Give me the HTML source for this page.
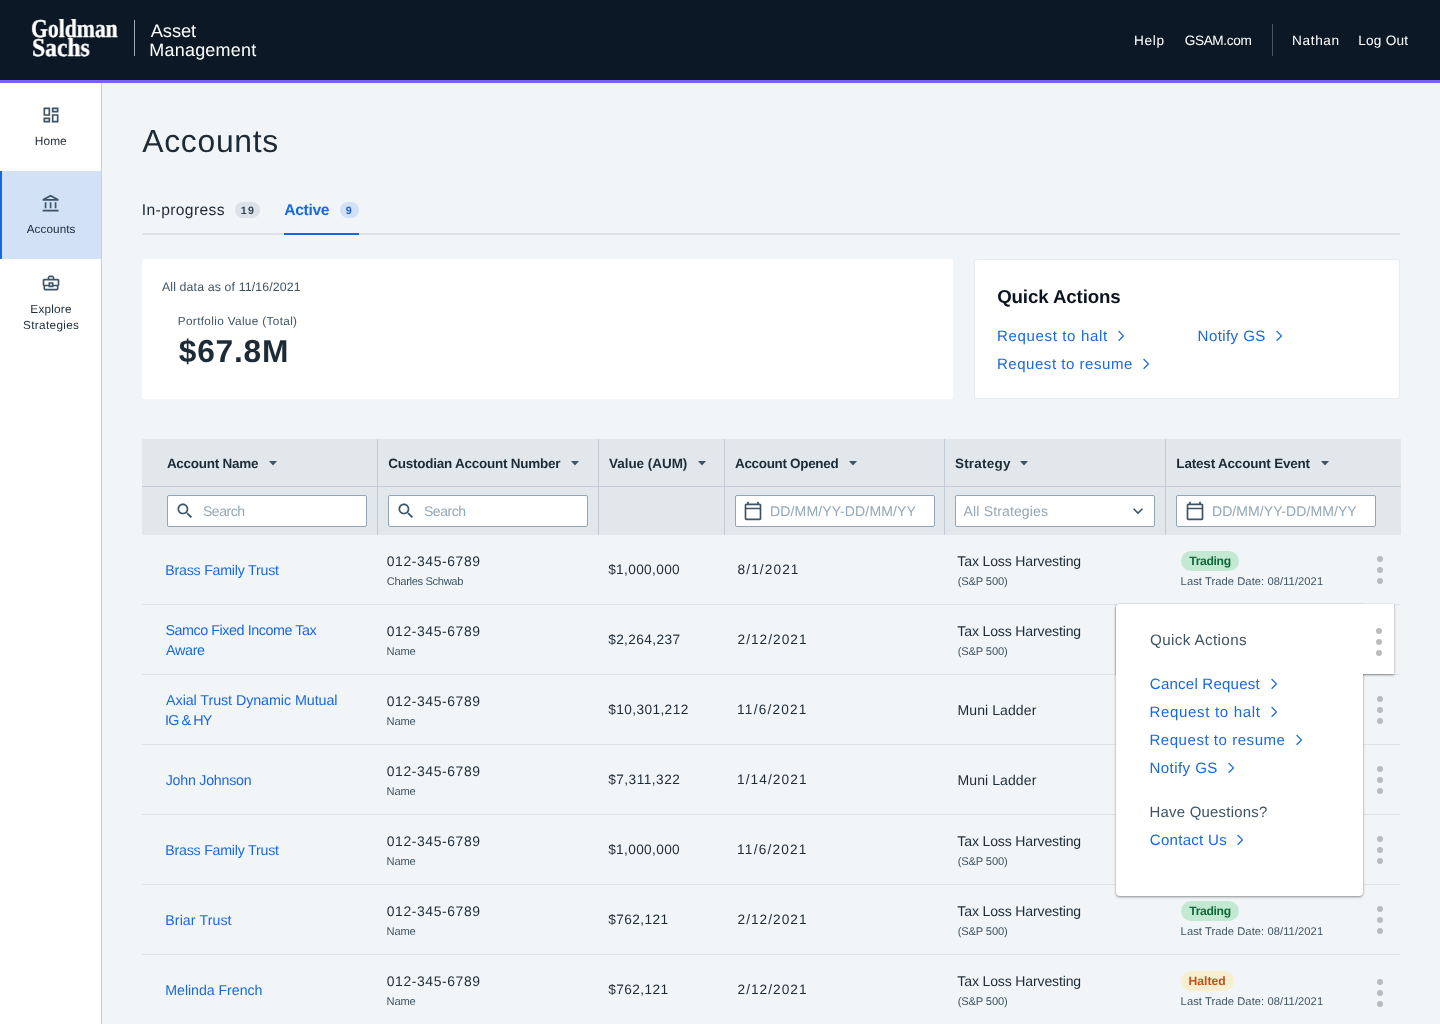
<!DOCTYPE html>
<html lang="en">
<head>
<meta charset="utf-8">
<title>Accounts</title>
<style>
*{box-sizing:border-box;margin:0;padding:0}
html,body{width:1440px;height:1024px;overflow:hidden}
body{font-family:"Liberation Sans",sans-serif;background:#f2f5f8;color:#1c2b36;position:relative;text-rendering:geometricPrecision}
.t{position:absolute;white-space:nowrap;font-weight:normal;text-decoration:none;display:block}
.b{position:absolute}
.ic{position:absolute;display:block;overflow:visible}
#hdr{position:absolute;left:0;top:0;width:1440px;height:83px;background:#0d1826;border-bottom:3px solid #7b5ffb}
.gs{position:absolute;left:31px;top:18.5px;white-space:nowrap;font-family:"Liberation Serif",serif;font-weight:bold;color:#fff;font-size:25.8px;line-height:19px;transform-origin:0 0;transform:scaleX(.84);-webkit-text-stroke:.35px #fff;will-change:transform}
#side{position:absolute;left:0;top:83px;width:102px;height:941px;background:#fff;border-right:1px solid #c5cfda}
.sact{position:absolute;left:0;top:171px;width:101px;height:88px;background:#d2e1f6;border-left:2px solid #1a69da}
.badge{position:absolute;top:202px;height:16px;border-radius:8px}
.card{position:absolute;background:#fff;border-radius:2px}
#thead{position:absolute;left:142px;top:439px;width:1259px;height:96px;background:#e1e7eb}
.vsep{position:absolute;top:439px;width:1px;height:96px;background:#c2ccd7}
.inp{position:absolute;top:495px;height:32px;width:200px;background:#fff;border:1px solid #90a5b7;border-radius:2px}
.rl{position:absolute;left:142px;width:1258px;height:1px;background:#dde3e9}
.pill{position:absolute;height:20px;border-radius:10px}
.dot{position:absolute;width:6.4px;height:6.4px;border-radius:50%;background:#bbb}
.pop{position:absolute;background:#fff}
.lay{position:absolute;left:0;top:0;width:1440px;height:1024px;will-change:transform}
</style>
</head>
<body>
<div id="hdr">
  <div class="gs">Goldman</div>
  <div class="gs" style="top:37.5px;left:32px;transform:scaleX(.915)">Sachs</div>
  <div class="b" style="left:134px;top:20px;width:1px;height:36px;background:#a3a9b2"></div>
  <div class="b" style="left:1272px;top:24px;width:1px;height:32px;background:#4a5563"></div>
</div>
<div id="side"></div>
<div class="sact"></div>

<svg class="ic" style="left:41px;top:105px" width="20" height="20" viewBox="0 0 24 24"><path fill="#3d5467" d="M19 5v2h-4V5h4M9 5v6H5V5h4m10 8v6h-4v-6h4M9 17v2H5v-2h4M21 3h-8v6h8V3zM11 3H3v10h8V3zm10 8h-8v10h8V11zm-10 4H3v6h8v-6z"/></svg>
<svg class="ic" style="left:41.3px;top:193.5px" width="20" height="20" viewBox="0 0 24 24"><path fill="#3d5467" d="M6.5 10h-2v7h2v-7zm6 0h-2v7h2v-7zm8.5 9H2v2h19v-2zm-2.5-9h-2v7h2v-7zm-7-6.74L16.71 6H6.29l5.21-2.74m0-2.26L2 6v2h19V6l-9.5-5z"/></svg>
<svg class="ic" style="left:40.8px;top:272.5px" width="20" height="20" viewBox="0 0 24 24"><path fill="#3d5467" d="M20 7h-4V5l-2-2h-4L8 5v2H4c-1.1 0-2 .9-2 2v5c0 .75.4 1.38 1 1.73V19c0 1.11.89 2 2 2h14c1.11 0 2-.89 2-2v-3.28c.59-.35 1-.99 1-1.72V9c0-1.1-.9-2-2-2zM10 5h4v2h-4V5zM4 9h16v5h-5v-3H9v3H4V9zm9 6h-2v-2h2v2zm6 4H5v-3h4v1h6v-1h4v3z"/></svg>

<div class="badge" style="left:235px;width:25px;background:#dce2e8"></div>
<div class="badge" style="left:340px;width:19px;background:#d2e1f6"></div>
<div class="b" style="left:142px;top:233px;width:1258px;height:2px;background:#dce2e8"></div>
<div class="b" style="left:284px;top:233px;width:75px;height:2px;background:#1a69da"></div>
<div class="card" style="left:142px;top:259px;width:811px;height:140px"></div>
<div class="card" style="left:975px;top:260px;width:424px;height:138px;box-shadow:0 0 0 1px #e8ecf0"></div>
<div id="thead"></div>
<div class="b" style="left:142px;top:486px;width:1259px;height:1px;background:#c2ccd7"></div>

<div class="vsep" style="left:377px"></div>
<div class="vsep" style="left:598px"></div>
<div class="vsep" style="left:724px"></div>
<div class="vsep" style="left:944px"></div>
<div class="vsep" style="left:1165px"></div>
<svg class="ic" style="left:269.00px;top:460.8px" width="8" height="4.5" viewBox="0 0 8 4.5"><path d="M0 0h8L4 4.5z" fill="#3d5467"/></svg>
<svg class="ic" style="left:570.75px;top:460.8px" width="8" height="4.5" viewBox="0 0 8 4.5"><path d="M0 0h8L4 4.5z" fill="#3d5467"/></svg>
<svg class="ic" style="left:698.00px;top:460.8px" width="8" height="4.5" viewBox="0 0 8 4.5"><path d="M0 0h8L4 4.5z" fill="#3d5467"/></svg>
<svg class="ic" style="left:849.10px;top:460.8px" width="8" height="4.5" viewBox="0 0 8 4.5"><path d="M0 0h8L4 4.5z" fill="#3d5467"/></svg>
<svg class="ic" style="left:1020.40px;top:460.8px" width="8" height="4.5" viewBox="0 0 8 4.5"><path d="M0 0h8L4 4.5z" fill="#3d5467"/></svg>
<svg class="ic" style="left:1320.50px;top:460.8px" width="8" height="4.5" viewBox="0 0 8 4.5"><path d="M0 0h8L4 4.5z" fill="#3d5467"/></svg>
<div class="inp" style="left:167px"></div>
<div class="inp" style="left:388px"></div>
<div class="inp" style="left:735px"></div>
<div class="inp" style="left:955px"></div>
<div class="inp" style="left:1176px"></div>
<svg class="ic" style="left:175px;top:501px" width="20" height="20" viewBox="0 0 24 24"><path fill="#3d5467" d="M15.5 14h-.79l-.28-.27C15.41 12.59 16 11.11 16 9.5 16 5.91 13.09 3 9.5 3S3 5.91 3 9.5 5.91 16 9.5 16c1.61 0 3.09-.59 4.23-1.57l.27.28v.79l5 4.99L20.49 19l-4.99-5zm-6 0C7.01 14 5 11.99 5 9.5S7.01 5 9.5 5 14 7.01 14 9.5 11.99 14 9.500 14z"/></svg>
<svg class="ic" style="left:396px;top:501px" width="20" height="20" viewBox="0 0 24 24"><path fill="#3d5467" d="M15.5 14h-.79l-.28-.27C15.41 12.59 16 11.11 16 9.5 16 5.91 13.09 3 9.5 3S3 5.91 3 9.5 5.91 16 9.5 16c1.61 0 3.09-.59 4.23-1.57l.27.28v.79l5 4.99L20.49 19l-4.99-5zm-6 0C7.01 14 5 11.99 5 9.5S7.01 5 9.5 5 14 7.01 14 9.5 11.99 14 9.500 14z"/></svg>
<svg class="ic" style="left:743px;top:501px" width="20" height="20" viewBox="0 0 24 24"><path fill="#3d5467" d="M20 3h-1V1h-2v2H7V1H5v2H4c-1.1 0-2 .9-2 2v16c0 1.1.9 2 2 2h16c1.1 0 2-.9 2-2V5c0-1.1-.9-2-2-2zm0 18H4V10h16v11zm0-13H4V5h16v3z"/></svg>
<svg class="ic" style="left:1184.5px;top:501px" width="20" height="20" viewBox="0 0 24 24"><path fill="#3d5467" d="M20 3h-1V1h-2v2H7V1H5v2H4c-1.1 0-2 .9-2 2v16c0 1.1.9 2 2 2h16c1.1 0 2-.9 2-2V5c0-1.1-.9-2-2-2zm0 18H4V10h16v11zm0-13H4V5h16v3z"/></svg>
<svg class="ic" style="left:1127.9px;top:501px" width="20" height="20" viewBox="0 0 24 24"><path fill="#3d5467" d="M16.59 8.59 12 13.17 7.41 8.59 6 10l6 6 6-6z"/></svg>
<svg class="ic" style="left:1117.4px;top:330.0px" width="9" height="13" viewBox="0 0 9 13"><path d="M1.6 1 L6.4 5.9 L1.6 10.8" fill="none" stroke="#1a69da" stroke-width="1.25"/></svg>
<svg class="ic" style="left:1275.1px;top:330.0px" width="9" height="13" viewBox="0 0 9 13"><path d="M1.6 1 L6.4 5.9 L1.6 10.8" fill="none" stroke="#1a69da" stroke-width="1.25"/></svg>
<svg class="ic" style="left:1142.3px;top:358.0px" width="9" height="13" viewBox="0 0 9 13"><path d="M1.6 1 L6.4 5.9 L1.6 10.8" fill="none" stroke="#1a69da" stroke-width="1.25"/></svg>
<div class="rl" style="top:604px"></div>
<div class="pill" style="left:1181px;top:551px;width:58px;background:#c4e9d2"></div>
<div class="dot" style="left:1376.9px;top:555.8px"></div>
<div class="dot" style="left:1376.9px;top:566.8px"></div>
<div class="dot" style="left:1376.9px;top:577.8px"></div>
<div class="rl" style="top:674px"></div>
<div class="rl" style="top:744px"></div>
<div class="dot" style="left:1376.9px;top:695.8px"></div>
<div class="dot" style="left:1376.9px;top:706.8px"></div>
<div class="dot" style="left:1376.9px;top:717.8px"></div>
<div class="rl" style="top:814px"></div>
<div class="dot" style="left:1376.9px;top:765.8px"></div>
<div class="dot" style="left:1376.9px;top:776.8px"></div>
<div class="dot" style="left:1376.9px;top:787.8px"></div>
<div class="rl" style="top:884px"></div>
<div class="dot" style="left:1376.9px;top:835.8px"></div>
<div class="dot" style="left:1376.9px;top:846.8px"></div>
<div class="dot" style="left:1376.9px;top:857.8px"></div>
<div class="rl" style="top:954px"></div>
<div class="pill" style="left:1181px;top:901px;width:58px;background:#c4e9d2"></div>
<div class="dot" style="left:1376.9px;top:905.8px"></div>
<div class="dot" style="left:1376.9px;top:916.8px"></div>
<div class="dot" style="left:1376.9px;top:927.8px"></div>
<div class="rl" style="top:1024px"></div>
<div class="pill" style="left:1181px;top:971px;width:53px;background:#f8efd0"></div>
<div class="dot" style="left:1376.9px;top:978.8px"></div>
<div class="dot" style="left:1376.9px;top:989.8px"></div>
<div class="dot" style="left:1376.9px;top:1000.8px"></div>
<div class="lay">
<div class="t" style="left:150.66px;top:19.17px;font-size:18.26px;line-height:23px;color:#fff;letter-spacing:-0.032px">Asset</div>
<div class="t" style="left:149.31px;top:39.22px;font-size:17.97px;line-height:23px;color:#fff;letter-spacing:0.230px">Management</div>
<div class="t" style="left:1134.12px;top:32.03px;font-size:13.62px;line-height:18px;color:#fff;letter-spacing:0.677px">Help</div>
<div class="t" style="left:1184.71px;top:32.03px;font-size:13.62px;line-height:18px;color:#fff;letter-spacing:-0.365px">GSAM.com</div>
<div class="t" style="left:1292.12px;top:32.03px;font-size:13.62px;line-height:18px;color:#fff;letter-spacing:0.619px">Nathan</div>
<div class="t" style="left:1358.15px;top:32.03px;font-size:13.62px;line-height:18px;color:#fff;letter-spacing:0.255px">Log Out</div>
<div class="t" style="left:34.80px;top:134.13px;font-size:11.88px;line-height:15px;color:#1c2b36;letter-spacing:0.085px">Home</div>
<div class="t" style="left:26.64px;top:222.08px;font-size:11.74px;line-height:15px;color:#1c2b36;letter-spacing:0.080px">Accounts</div>
<div class="t" style="left:30.33px;top:302.08px;font-size:11.74px;line-height:15px;color:#1c2b36;letter-spacing:0.228px">Explore</div>
<div class="t" style="left:23.07px;top:318.08px;font-size:11.74px;line-height:15px;color:#1c2b36;letter-spacing:0.336px">Strategies</div>
<h1 class="t" style="left:142.26px;top:121.15px;font-size:31.88px;line-height:40px;color:#1c2b36;letter-spacing:0.700px">Accounts</h1>
<div class="t" style="left:141.75px;top:201.08px;font-size:15.65px;line-height:20px;color:#1c2b36;letter-spacing:0.375px">In-progress</div>
<div class="t" style="left:240.85px;top:204.09px;font-size:10.7px;line-height:14px;color:#33475a;font-weight:bold;letter-spacing:1.302px">19</div>
<div class="t" style="left:284.23px;top:201.08px;font-size:15.65px;line-height:20px;color:#1a69da;font-weight:bold;letter-spacing:-0.323px">Active</div>
<div class="t" style="left:345.74px;top:204.09px;font-size:10.7px;line-height:14px;color:#1a5fd0;font-weight:bold">9</div>
<div class="t" style="left:161.98px;top:279.23px;font-size:12.32px;line-height:16px;color:#3e5463;letter-spacing:0.138px">All data as of 11/16/2021</div>
<div class="t" style="left:177.80px;top:314.18px;font-size:11.74px;line-height:15px;color:#3e5463;letter-spacing:0.359px">Portfolio Value (Total)</div>
<div class="t" style="left:178.76px;top:331.15px;font-size:31.74px;line-height:40px;color:#1c2b36;font-weight:bold;letter-spacing:0.756px">$67.8M</div>
<div class="t" style="left:997.14px;top:285.12px;font-size:18.7px;line-height:24px;color:#0b1420;font-weight:bold;letter-spacing:-0.111px">Quick Actions</div>
<a class="t" style="left:996.88px;top:327.18px;font-size:15.07px;line-height:19px;color:#1a69da;letter-spacing:0.640px">Request to halt</a>
<a class="t" style="left:1197.61px;top:327.18px;font-size:15.07px;line-height:19px;color:#1a69da;letter-spacing:0.405px">Notify GS</a>
<a class="t" style="left:996.88px;top:355.18px;font-size:15.07px;line-height:19px;color:#1a69da;letter-spacing:0.515px">Request to resume</a>
<div class="t" style="left:166.88px;top:455.23px;font-size:13.48px;line-height:17px;color:#1c2b36;font-weight:bold;letter-spacing:-0.254px">Account Name</div>
<div class="t" style="left:388.18px;top:455.23px;font-size:13.48px;line-height:17px;color:#1c2b36;font-weight:bold;letter-spacing:-0.227px">Custodian Account Number</div>
<div class="t" style="left:608.99px;top:455.23px;font-size:13.48px;line-height:17px;color:#1c2b36;font-weight:bold;letter-spacing:-0.022px">Value (AUM)</div>
<div class="t" style="left:734.97px;top:455.23px;font-size:13.48px;line-height:17px;color:#1c2b36;font-weight:bold;letter-spacing:-0.316px">Account Opened</div>
<div class="t" style="left:954.91px;top:455.23px;font-size:13.48px;line-height:17px;color:#1c2b36;font-weight:bold;letter-spacing:0.237px">Strategy</div>
<div class="t" style="left:1176.36px;top:455.23px;font-size:13.48px;line-height:17px;color:#1c2b36;font-weight:bold;letter-spacing:-0.182px">Latest Account Event</div>
<div class="t" style="left:202.91px;top:502.13px;font-size:14.06px;line-height:18px;color:#93a8b8;letter-spacing:-0.449px">Search</div>
<div class="t" style="left:423.91px;top:502.13px;font-size:14.06px;line-height:18px;color:#93a8b8;letter-spacing:-0.449px">Search</div>
<div class="t" style="left:769.97px;top:502.13px;font-size:14.06px;line-height:18px;color:#93a8b8;letter-spacing:0.135px">DD/MM/YY-DD/MM/YY</div>
<div class="t" style="left:963.62px;top:502.13px;font-size:14.06px;line-height:18px;color:#93a8b8;letter-spacing:0.127px">All Strategies</div>
<div class="t" style="left:1211.97px;top:502.13px;font-size:14.06px;line-height:18px;color:#93a8b8;letter-spacing:0.057px">DD/MM/YY-DD/MM/YY</div>
<a class="t" style="left:165.29px;top:562.08px;font-size:14.2px;line-height:18px;color:#1a69da;letter-spacing:-0.221px">Brass Family Trust</a>
<div class="t" style="left:386.79px;top:552.07px;font-size:13.94px;line-height:18px;color:#1c2b36;letter-spacing:0.586px">012-345-6789</div>
<div class="t" style="left:386.79px;top:575.13px;font-size:11.16px;line-height:14px;color:#3e5463;letter-spacing:-0.354px">Charles Schwab</div>
<div class="t" style="left:608.17px;top:561.07px;font-size:13.66px;line-height:18px;color:#1c2b36;letter-spacing:0.352px">$1,000,000</div>
<div class="t" style="left:737.54px;top:561.07px;font-size:13.66px;line-height:18px;color:#1c2b36;letter-spacing:1.106px">8/1/2021</div>
<div class="t" style="left:957.36px;top:552.03px;font-size:14.06px;line-height:18px;color:#1c2b36;letter-spacing:-0.149px">Tax Loss Harvesting</div>
<div class="t" style="left:957.65px;top:575.13px;font-size:11.16px;line-height:14px;color:#3e5463;letter-spacing:-0.147px">(S&amp;P 500)</div>
<div class="t" style="left:1189.30px;top:553.18px;font-size:12.17px;line-height:16px;color:#0e6a3b;font-weight:bold;letter-spacing:-0.353px">Trading</div>
<div class="t" style="left:1180.62px;top:575.13px;font-size:11.16px;line-height:14px;color:#3e5463;letter-spacing:0.073px">Last Trade Date: 08/11/2021</div>
<a class="t" style="left:165.42px;top:622.03px;font-size:14.35px;line-height:18px;color:#1a69da;letter-spacing:-0.454px">Samco Fixed Income Tax</a>
<a class="t" style="left:166.09px;top:642.03px;font-size:14.35px;line-height:18px;color:#1a69da;letter-spacing:-0.348px">Aware</a>
<div class="t" style="left:386.79px;top:622.07px;font-size:13.94px;line-height:18px;color:#1c2b36;letter-spacing:0.586px">012-345-6789</div>
<div class="t" style="left:386.62px;top:645.13px;font-size:11.16px;line-height:14px;color:#3e5463;letter-spacing:-0.195px">Name</div>
<div class="t" style="left:608.17px;top:631.07px;font-size:13.66px;line-height:18px;color:#1c2b36;letter-spacing:0.386px">$2,264,237</div>
<div class="t" style="left:737.57px;top:631.07px;font-size:13.66px;line-height:18px;color:#1c2b36;letter-spacing:1.020px">2/12/2021</div>
<div class="t" style="left:957.36px;top:622.03px;font-size:14.06px;line-height:18px;color:#1c2b36;letter-spacing:-0.149px">Tax Loss Harvesting</div>
<div class="t" style="left:957.65px;top:645.13px;font-size:11.16px;line-height:14px;color:#3e5463;letter-spacing:-0.147px">(S&amp;P 500)</div>
<a class="t" style="left:166.09px;top:692.03px;font-size:14.35px;line-height:18px;color:#1a69da;letter-spacing:-0.094px">Axial Trust Dynamic Mutual</a>
<a class="t" style="left:165.04px;top:712.03px;font-size:14.35px;line-height:18px;color:#1a69da;letter-spacing:-0.874px">IG &amp; HY</a>
<div class="t" style="left:386.79px;top:692.07px;font-size:13.94px;line-height:18px;color:#1c2b36;letter-spacing:0.586px">012-345-6789</div>
<div class="t" style="left:386.62px;top:715.13px;font-size:11.16px;line-height:14px;color:#3e5463;letter-spacing:-0.195px">Name</div>
<div class="t" style="left:608.17px;top:701.07px;font-size:13.66px;line-height:18px;color:#1c2b36;letter-spacing:0.413px">$10,301,212</div>
<div class="t" style="left:737.07px;top:701.07px;font-size:13.66px;line-height:18px;color:#1c2b36;letter-spacing:1.207px">11/6/2021</div>
<div class="t" style="left:957.51px;top:701.13px;font-size:14.06px;line-height:18px;color:#1c2b36;letter-spacing:0.072px">Muni Ladder</div>
<a class="t" style="left:165.74px;top:772.08px;font-size:14.2px;line-height:18px;color:#1a69da;letter-spacing:-0.230px">John Johnson</a>
<div class="t" style="left:386.79px;top:762.07px;font-size:13.94px;line-height:18px;color:#1c2b36;letter-spacing:0.586px">012-345-6789</div>
<div class="t" style="left:386.62px;top:785.13px;font-size:11.16px;line-height:14px;color:#3e5463;letter-spacing:-0.195px">Name</div>
<div class="t" style="left:608.17px;top:771.07px;font-size:13.66px;line-height:18px;color:#1c2b36;letter-spacing:0.488px">$7,311,322</div>
<div class="t" style="left:737.07px;top:771.07px;font-size:13.66px;line-height:18px;color:#1c2b36;letter-spacing:1.082px">1/14/2021</div>
<div class="t" style="left:957.51px;top:771.13px;font-size:14.06px;line-height:18px;color:#1c2b36;letter-spacing:0.072px">Muni Ladder</div>
<a class="t" style="left:165.29px;top:842.08px;font-size:14.2px;line-height:18px;color:#1a69da;letter-spacing:-0.221px">Brass Family Trust</a>
<div class="t" style="left:386.79px;top:832.07px;font-size:13.94px;line-height:18px;color:#1c2b36;letter-spacing:0.586px">012-345-6789</div>
<div class="t" style="left:386.62px;top:855.13px;font-size:11.16px;line-height:14px;color:#3e5463;letter-spacing:-0.195px">Name</div>
<div class="t" style="left:608.17px;top:841.07px;font-size:13.66px;line-height:18px;color:#1c2b36;letter-spacing:0.352px">$1,000,000</div>
<div class="t" style="left:737.07px;top:841.07px;font-size:13.66px;line-height:18px;color:#1c2b36;letter-spacing:1.207px">11/6/2021</div>
<div class="t" style="left:957.36px;top:832.03px;font-size:14.06px;line-height:18px;color:#1c2b36;letter-spacing:-0.149px">Tax Loss Harvesting</div>
<div class="t" style="left:957.65px;top:855.13px;font-size:11.16px;line-height:14px;color:#3e5463;letter-spacing:-0.147px">(S&amp;P 500)</div>
<a class="t" style="left:165.29px;top:912.08px;font-size:14.2px;line-height:18px;color:#1a69da;letter-spacing:0.084px">Briar Trust</a>
<div class="t" style="left:386.79px;top:902.07px;font-size:13.94px;line-height:18px;color:#1c2b36;letter-spacing:0.586px">012-345-6789</div>
<div class="t" style="left:386.62px;top:925.13px;font-size:11.16px;line-height:14px;color:#3e5463;letter-spacing:-0.195px">Name</div>
<div class="t" style="left:608.17px;top:911.07px;font-size:13.66px;line-height:18px;color:#1c2b36;letter-spacing:0.442px">$762,121</div>
<div class="t" style="left:737.57px;top:911.07px;font-size:13.66px;line-height:18px;color:#1c2b36;letter-spacing:1.020px">2/12/2021</div>
<div class="t" style="left:957.36px;top:902.03px;font-size:14.06px;line-height:18px;color:#1c2b36;letter-spacing:-0.149px">Tax Loss Harvesting</div>
<div class="t" style="left:957.65px;top:925.13px;font-size:11.16px;line-height:14px;color:#3e5463;letter-spacing:-0.147px">(S&amp;P 500)</div>
<div class="t" style="left:1189.30px;top:903.18px;font-size:12.17px;line-height:16px;color:#0e6a3b;font-weight:bold;letter-spacing:-0.353px">Trading</div>
<div class="t" style="left:1180.62px;top:925.13px;font-size:11.16px;line-height:14px;color:#3e5463;letter-spacing:0.073px">Last Trade Date: 08/11/2021</div>
<a class="t" style="left:165.29px;top:982.08px;font-size:14.2px;line-height:18px;color:#1a69da;letter-spacing:-0.051px">Melinda French</a>
<div class="t" style="left:386.79px;top:972.07px;font-size:13.94px;line-height:18px;color:#1c2b36;letter-spacing:0.586px">012-345-6789</div>
<div class="t" style="left:386.62px;top:995.13px;font-size:11.16px;line-height:14px;color:#3e5463;letter-spacing:-0.195px">Name</div>
<div class="t" style="left:608.17px;top:981.07px;font-size:13.66px;line-height:18px;color:#1c2b36;letter-spacing:0.442px">$762,121</div>
<div class="t" style="left:737.57px;top:981.07px;font-size:13.66px;line-height:18px;color:#1c2b36;letter-spacing:1.020px">2/12/2021</div>
<div class="t" style="left:957.36px;top:972.03px;font-size:14.06px;line-height:18px;color:#1c2b36;letter-spacing:-0.149px">Tax Loss Harvesting</div>
<div class="t" style="left:957.65px;top:995.13px;font-size:11.16px;line-height:14px;color:#3e5463;letter-spacing:-0.147px">(S&amp;P 500)</div>
<div class="t" style="left:1188.59px;top:973.18px;font-size:12.17px;line-height:16px;color:#c4501f;font-weight:bold;letter-spacing:-0.020px">Halted</div>
<div class="t" style="left:1180.62px;top:995.13px;font-size:11.16px;line-height:14px;color:#3e5463;letter-spacing:0.073px">Last Trade Date: 08/11/2021</div>
</div>

<div class="pop" style="left:1116px;top:604px;width:278px;height:70px;border-radius:4px 0 0 0;box-shadow:0 1px 2.5px rgba(0,0,0,.42),0 0 1px rgba(0,0,0,.18)"></div>
<div class="pop" style="left:1116px;top:604px;width:247px;height:292px;border-radius:4px 0 4px 4px;box-shadow:0 1px 2.5px rgba(0,0,0,.42),0 0 1px rgba(0,0,0,.18)"></div>
<div class="pop" style="left:1116px;top:604px;width:278px;height:70px;border-radius:4px 0 0 0"></div>

<div class="dot" style="left:1375.9px;top:627.9px"></div>
<div class="dot" style="left:1375.9px;top:639.0px"></div>
<div class="dot" style="left:1375.9px;top:650.1px"></div>
<div class="lay">
<div class="t" style="left:1149.96px;top:631.03px;font-size:15.22px;line-height:20px;color:#3e5463;letter-spacing:0.372px">Quick Actions</div>
<a class="t" style="left:1149.81px;top:675.18px;font-size:15.07px;line-height:19px;color:#1a69da;letter-spacing:0.211px">Cancel Request</a>
<a class="t" style="left:1149.41px;top:703.18px;font-size:15.07px;line-height:19px;color:#1a69da;letter-spacing:0.655px">Request to halt</a>
<a class="t" style="left:1149.41px;top:731.18px;font-size:15.07px;line-height:19px;color:#1a69da;letter-spacing:0.521px">Request to resume</a>
<a class="t" style="left:1149.41px;top:759.18px;font-size:15.07px;line-height:19px;color:#1a69da;letter-spacing:0.443px">Notify GS</a>
<div class="t" style="left:1149.46px;top:803.23px;font-size:14.93px;line-height:19px;color:#3e5463;letter-spacing:0.247px">Have Questions?</div>
<a class="t" style="left:1149.81px;top:831.18px;font-size:15.07px;line-height:19px;color:#1a69da;letter-spacing:0.266px">Contact Us</a>
</div>
<svg class="ic" style="left:1270.2px;top:678.0px" width="9" height="13" viewBox="0 0 9 13"><path d="M1.6 1 L6.4 5.9 L1.6 10.8" fill="none" stroke="#1a69da" stroke-width="1.25"/></svg>
<svg class="ic" style="left:1270.2px;top:706.0px" width="9" height="13" viewBox="0 0 9 13"><path d="M1.6 1 L6.4 5.9 L1.6 10.8" fill="none" stroke="#1a69da" stroke-width="1.25"/></svg>
<svg class="ic" style="left:1295.1px;top:734.0px" width="9" height="13" viewBox="0 0 9 13"><path d="M1.6 1 L6.4 5.9 L1.6 10.8" fill="none" stroke="#1a69da" stroke-width="1.25"/></svg>
<svg class="ic" style="left:1227.3px;top:762.0px" width="9" height="13" viewBox="0 0 9 13"><path d="M1.6 1 L6.4 5.9 L1.6 10.8" fill="none" stroke="#1a69da" stroke-width="1.25"/></svg>
<svg class="ic" style="left:1236.4px;top:834.0px" width="9" height="13" viewBox="0 0 9 13"><path d="M1.6 1 L6.4 5.9 L1.6 10.8" fill="none" stroke="#1a69da" stroke-width="1.25"/></svg>
</body>
</html>
